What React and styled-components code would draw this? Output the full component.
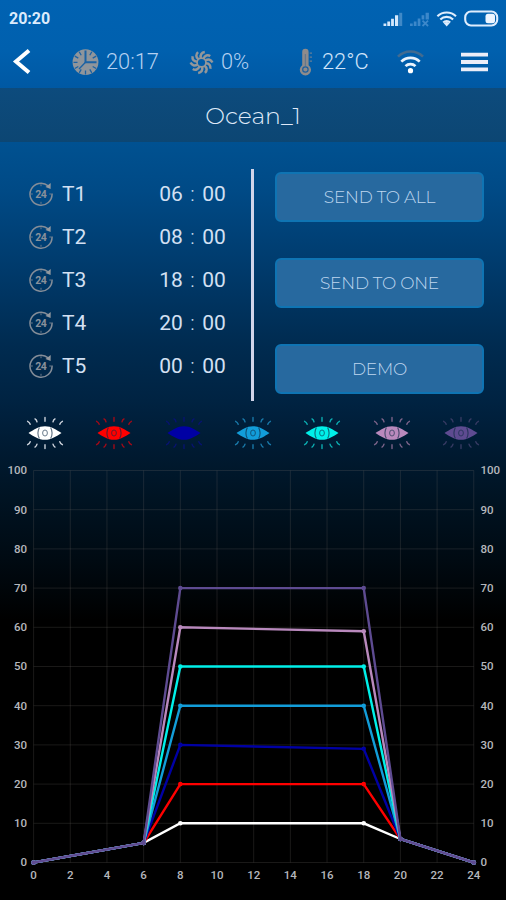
import React from "react";
import styled, { createGlobalStyle } from "styled-components";

const GlobalStyle = createGlobalStyle`
  * { box-sizing: border-box; }
  body { margin: 0; background: #000; }
`;

const Screen = styled.main`
  width: 506px;
  height: 900px;
  display: flex;
  flex-direction: column;
  overflow: hidden;
  font-family: Roboto, sans-serif;
  color: #d3e0f3;
  background: linear-gradient(
    180deg,
    #0062b2 0px,
    #0060ae 50px,
    #0056a0 100px,
    #00508f 150px,
    #004a86 190px,
    #003a6b 270px,
    #002b50 345px,
    #002342 400px,
    #001b33 445px,
    #001322 500px,
    #000a12 560px,
    #000 620px
  );
`;

const StatusBar = styled.div`
  height: 36px;
  display: flex;
  align-items: center;
  padding: 1px 7px 0 9px;
`;

const StatusTime = styled.span`
  flex: 1;
  font-size: 16px;
  font-weight: 700;
  line-height: 20px;
  color: #dcebfc;
`;

const StatusIcons = styled.svg`
  width: 118px;
  height: 20px;
  display: block;
`;

const Toolbar = styled.header`
  height: 52px;
  display: grid;
  grid-template-columns: 72px 117px 109px 99px 62px 47px;
  align-items: center;
`;

const IconButton = styled.button`
  display: flex;
  align-items: center;
  border: 0;
  padding: 0 0 0 ${(p) => p.$inset || 0}px;
  background: none;
`;

const Reading = styled.div`
  display: flex;
  align-items: center;
  gap: ${(p) => p.$gap}px;
  font-size: 21.8px;
  line-height: 26px;
  font-weight: ${(p) => (p.$strong ? 350 : 300)};
  white-space: nowrap;
  color: ${(p) => (p.$strong ? "#d0e4fa" : "#b5d1f1")};
`;

const TitleBar = styled.div`
  height: 54px;
  display: flex;
  align-items: center;
  justify-content: center;
  padding-top: 2px;
  background: linear-gradient(#0d4b7d, #0c4673);
`;

const Title = styled.h1`
  margin: 0;
  font-family: Montserrat, Inter, sans-serif;
  font-size: 23.5px;
  line-height: 30px;
  font-weight: 350;
  color: #dfe9f8;
`;

const Controls = styled.section`
  height: 274px;
  display: grid;
  grid-template-columns: 251px 3px 252px;
  padding-top: 27px;
`;

const TimeList = styled.ul`
  margin: 3px 0 0;
  padding: 0 25px 0 28px;
  list-style: none;
`;

const TimeRow = styled.li`
  height: 43px;
  display: grid;
  grid-template-columns: 34px 97px 1fr;
  align-items: center;
  font-size: 21px;
  line-height: 26px;
`;

const TimeValue = styled.span`
  display: grid;
  grid-template-columns: 24px 1fr 24px;
  justify-items: center;
  white-space: nowrap;
`;

const Colon = styled.span`
  font-weight: 300;
`;

const Divider = styled.div`
  height: 232px;
  background: #d0d4e9;
`;

const Actions = styled.div`
  display: flex;
  flex-direction: column;
  gap: 36px;
  padding: 3px 22px 0 21px;
`;

const Action = styled.button`
  height: 50px;
  flex: none;
  border: 2px solid #0f74b3;
  border-radius: 6px;
  padding: 0 0 1px;
  background: #27699f;
  color: #bfd7ef;
  font-family: Montserrat, Inter, sans-serif;
  font-size: 17px;
  line-height: 20px;
  font-weight: 350;
  letter-spacing: -0.22px;
`;

const Channels = styled.div`
  height: 34px;
  display: grid;
  grid-template-columns: repeat(7, 69.4px);
  justify-content: center;
  justify-items: center;
`;

const Chart = styled.svg`
  display: block;
  width: 506px;
  height: 450px;
`;

const AxisLabel = styled.text`
  font-family: Roboto, sans-serif;
  font-size: 11.5px;
  font-weight: 500;
  fill: #b5b7bc;
  text-anchor: ${(p) => p.$anchor || "middle"};
`;

function PhoneStatus() {
  return (
    <StatusIcons viewBox="381 8 118 20">
      <g fill="#d5e8fc">
        <path d="M383.5 25v-2.5h2.8V25zM387.3 25v-4.5h2.8V25zM391.1 25v-7.3h2.8V25zM395 25V14.3h3.2V25z" />
        <path d="M399.2 25V11.8h3V25z" opacity=".3" />
      </g>
      <g fill="#78afe5" opacity=".5">
        <path d="M410 25v-2.5h2.7V25zM413.8 25v-4.5h2.7V25zM417.7 25v-7.5h2.7V25zM421.6 18.5v-4.2h2.7v4.2zM425.6 18.5v-6.7h3.3v6.7z" />
        <path d="m422.5 19.7 5.6 5.3m0-5.3-5.6 5.3" stroke="#78afe5" strokeWidth="1.8" />
      </g>
      <g fill="none" stroke="#dfedfd" strokeWidth="2.1">
        <path d="M437.4 15.3a13.4 13.4 0 0 1 18.6 0M440.3 18.5a9 9 0 0 1 12.8 0M443.2 21.5a5 5 0 0 1 7 0" />
        <path d="m443.8 22.2 2.9 3.3 2.9-3.3a4 4 0 0 0-5.8 0z" fill="#dfedfd" stroke="none" />
        <rect x="465.2" y="10.5" width="32" height="14" rx="5.8" />
      </g>
      <rect x="485.5" y="12.8" width="9.5" height="9.5" rx="2.5" fill="#edf5ff" />
    </StatusIcons>
  );
}

function ClockIcon() {
  return (
    <svg width="27" height="27" viewBox="0 0 27 27">
      <circle cx="13.5" cy="13.2" r="12.9" fill="#8f959b" />
      <g stroke="#1b62a4" strokeWidth="1.3">
        <path d="M13.5 1.5v11.8H24.5" fill="none" strokeWidth="2" />
        <path d="M13.5 13.3 7 20M13.5 21.5v4M1.5 13.3h4M7.2 2.7l2 3.5M19.8 2.7l-2 3.5M2.8 7.1l3.5 2M24.2 7.1l-3.5 2M2.8 19.5l3.5-2M24.2 19.5l-3.5-2M19.8 23.9l-2-3.5M7.2 23.9l2-3.5" />
      </g>
    </svg>
  );
}

function FanIcon() {
  const blades = Array.from({ length: 10 }, (_, i) => i * 36);
  return (
    <svg width="25" height="25" viewBox="-12.5 -12.5 25 25">
      <g fill="none" stroke="#93979a" strokeWidth="2.5">
        {blades.map((a) => (
          <path key={a} transform={`rotate(${a})`} d="M-.6-4.4C-1.6-7.8.2-10 3.3-10.4" />
        ))}
        <circle r="4.4" strokeWidth="1.6" />
      </g>
    </svg>
  );
}

function ThermometerIcon() {
  return (
    <svg width="17" height="28" viewBox="0 0 17 28">
      <path d="M4.2 4a3.2 3.2 0 0 1 6.4 0v13.2a5.6 5.6 0 1 1-6.4 0z" fill="#8e8b8b" />
      <path d="M7.4 6v12" stroke="#64788d" strokeWidth="1.3" />
      <circle cx="7.4" cy="21.5" r="2.7" fill="none" stroke="#1e609f" strokeWidth="1.2" />
      <path d="M11.7 5.2H14M11.7 9.2H14M11.7 13.2H14" stroke="#667f98" strokeWidth="1.3" />
    </svg>
  );
}

function WifiIcon() {
  return (
    <svg width="27" height="25" viewBox="0.5 0 27 25">
      <g fill="none" strokeWidth="2.6">
        <path d="M1.5 6.7a17.7 17.7 0 0 1 25 0" stroke="#426b90" />
        <path d="M4.8 11.7a13 13 0 0 1 18.4 0M9 16.2a7 7 0 0 1 10 0" stroke="#eaf3fd" />
      </g>
      <circle cx="14" cy="20.7" r="2.6" fill="#fff" />
    </svg>
  );
}

function CycleIcon() {
  return (
    <svg width="26" height="26" viewBox="0 0 26 26">
      <path d="M20.2 4.9A11 11 0 1 0 24 12.5" fill="none" stroke="#848d98" strokeWidth="1.5" />
      <path d="m17.5 6.1 5.2-4.1-.1 6z" fill="#92989f" />
      <path d="M13 3.2v2M13 20.8v2M3 13h1.8M21.3 13h1.8" stroke="#6c7c8d" />
      <text x="12.8" y="16.6" textAnchor="middle" fontFamily="Roboto, sans-serif" fontSize="10.5" fontWeight="700" letterSpacing="-.4" fill="#89919b">24</text>
    </svg>
  );
}

function EyeIcon({ color, ray, solid }) {
  return (
    <svg width="40" height="34" viewBox="-20 -17 40 34">
      <path d="M-16.5 0C-11.5-3.2-6.5-6.8 0-6.8S11.5-3.2 16.5 0C11.5 3.2 6.5 6.8 0 6.8S-11.5 3.2-16.5 0z" fill={color} />
      {!solid && (
        <g fill="none" stroke="#102b45" opacity=".68">
          <path d="M-5.6-5.6q-3 5.6 0 11.2M5.6-5.6q3 5.6 0 11.2" strokeWidth="1.1" />
          <ellipse rx="2.4" ry="3" strokeWidth=".9" />
        </g>
      )}
      <path
        d="M0-11.8v-3.8M-8-11.2q-.4-2-2-2.9M8-11.2q.4-2 2-2.9M-14.8-8.7q-.6-2-2.6-3M14.8-8.7q.6-2 2.6-3M0 11.8v3.8M-8 11.2q-.4 2-2 2.9M8 11.2q.4 2 2 2.9M-14.8 8.7q-.6 2-2.6 3M14.8 8.7q.6 2 2.6 3"
        fill="none"
        stroke={ray}
        strokeWidth="1.4"
        strokeLinecap="round"
      />
    </svg>
  );
}

const times = [["T1", "06"], ["T2", "08"], ["T3", "18"], ["T4", "20"], ["T5", "00"]];

const channels = [
  { color: "#fff", ray: "#cdd3dc", day: 10, dusk: 10 },
  { color: "#f00", ray: "#a00a18", day: 20, dusk: 20 },
  { color: "#0000a4", ray: "#071370", day: 30, dusk: 29, solid: true },
  { color: "#129dd9", ray: "#1878a8", day: 40, dusk: 40 },
  { color: "#00f0e9", ray: "#0bacb0", day: 50, dusk: 50 },
  { color: "#b989bd", ray: "#7b6389", day: 60, dusk: 59 },
  { color: "#5e4b91", ray: "#353a62", day: 70, dusk: 70 },
];

const px = (hour) => 33.6 + hour * 18.34;
const py = (level) => 412.5 - level * 3.92;

function ScheduleChart() {
  const hours = Array.from({ length: 13 }, (_, i) => i * 2);
  const levels = Array.from({ length: 11 }, (_, i) => i * 10);
  return (
    <Chart viewBox="0 0 506 450">
      <g stroke="#77736f" strokeOpacity=".22">
        {hours.map((h) => <line key={h} x1={px(h)} x2={px(h)} y1={py(0)} y2={py(100)} />)}
        {levels.map((l) => <line key={l} x1={px(0)} x2={px(24)} y1={py(l)} y2={py(l)} />)}
      </g>
      {channels.map(({ color, day, dusk }) => {
        const points = [[0, 0], [6, 5], [8, day], [18, dusk], [20, 6], [24, 0]];
        return (
          <g key={day} fill={color}>
            <polyline points={points.map(([h, l]) => `${px(h)},${py(l)}`).join(" ")} fill="none" stroke={color} strokeWidth="2.4" />
            {points.map(([h, l]) => <circle key={h} cx={px(h)} cy={py(l)} r="2.3" />)}
          </g>
        );
      })}
      {levels.map((l) => (
        <React.Fragment key={l}>
          <AxisLabel x="27" y={py(l) + 3.8} $anchor="end">{l}</AxisLabel>
          <AxisLabel x="480.5" y={py(l) + 3.8} $anchor="start">{l}</AxisLabel>
        </React.Fragment>
      ))}
      {hours.map((h) => <AxisLabel key={h} x={px(h)} y="429">{h}</AxisLabel>)}
    </Chart>
  );
}

export default function App() {
  return (
    <Screen>
      <GlobalStyle />
      <StatusBar>
        <StatusTime>20:20</StatusTime>
        <PhoneStatus />
      </StatusBar>
      <Toolbar>
        <IconButton $inset={12} aria-label="Back">
          <svg width="20" height="28" viewBox="0 0 20 28">
            <path d="M17 2.5 4 13.5l13 11" fill="none" stroke="#fff" strokeWidth="4" />
          </svg>
        </IconButton>
        <Reading $gap={7}><ClockIcon />20:17</Reading>
        <Reading $gap={7}><FanIcon />0%</Reading>
        <Reading $gap={7} $strong><ThermometerIcon />22°C</Reading>
        <WifiIcon />
        <IconButton aria-label="Menu">
          <svg width="30" height="20" viewBox="0 0 30 20">
            <path d="M2 2.7h27M2 10h27M2 17.3h27" stroke="#ebedf8" strokeWidth="3.8" />
          </svg>
        </IconButton>
      </Toolbar>
      <TitleBar><Title>Ocean_1</Title></TitleBar>
      <Controls>
        <TimeList>
          {times.map(([name, hour]) => (
            <TimeRow key={name}>
              <CycleIcon />
              <span>{name}</span>
              <TimeValue><span>{hour}</span><Colon>:</Colon><span>00</span></TimeValue>
            </TimeRow>
          ))}
        </TimeList>
        <Divider />
        <Actions>
          <Action>SEND TO ALL</Action>
          <Action>SEND TO ONE</Action>
          <Action>DEMO</Action>
        </Actions>
      </Controls>
      <Channels>
        {channels.map((c) => <EyeIcon key={c.day} color={c.color} ray={c.ray} solid={c.solid} />)}
      </Channels>
      <ScheduleChart />
    </Screen>
  );
}
